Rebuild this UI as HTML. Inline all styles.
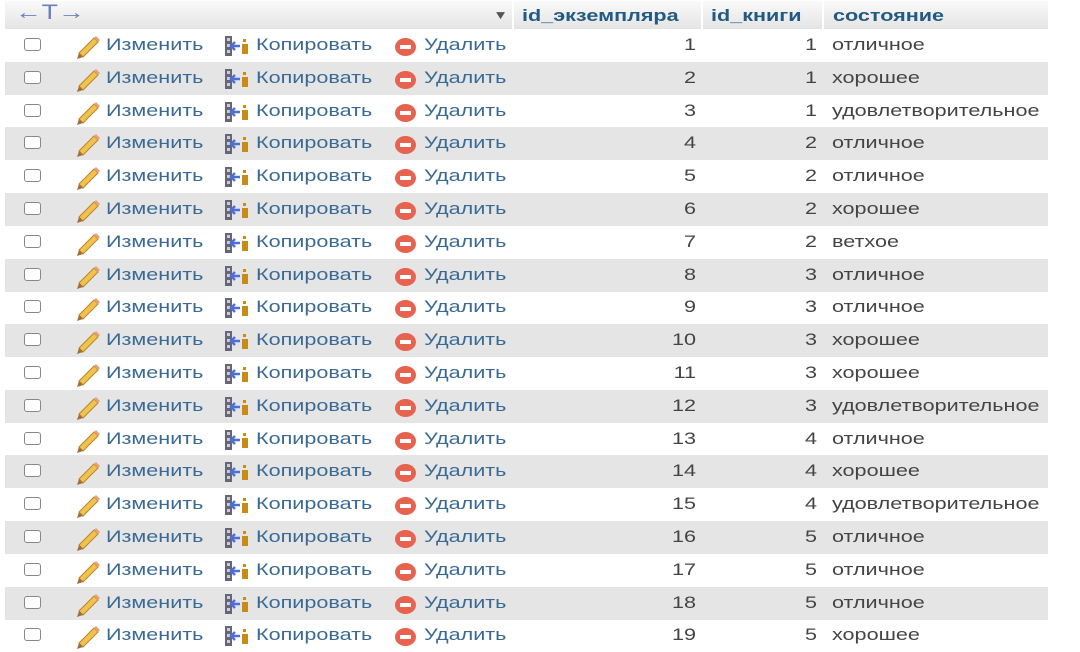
<!DOCTYPE html>
<html><head><meta charset="utf-8"><style>
body{margin:0;width:1080px;height:648px;background:#fff;position:relative;overflow:hidden;font-family:"Liberation Sans","DejaVu Sans",sans-serif;font-size:17px;}
.hd{position:absolute;left:5px;top:1px;width:1043px;height:28px;background:linear-gradient(#fafafa,#e4e4e4);}
.hd span{position:absolute;top:5px;font-weight:bold;color:#235a81;display:inline-block;transform:scaleX(1.27);transform-origin:left;}
.sep{position:absolute;top:1px;width:2px;height:28px;background:#fff;}
.r{position:absolute;left:5px;width:1043px;height:33px;}
.g{background:#e5e5e5;}
.r>*{position:absolute;top:6px;}
.r>span{display:inline-block;transform:scaleX(1.27);transform-origin:left;}
.cb{left:19px;top:9px!important;width:15px;height:11px;border:1.5px solid #888;border-radius:3px;background:#fff;}
.l{color:#3a6a94;}
.pen{left:70px;top:5px!important;}
.cp{left:218px;top:6px!important;}
.dl{left:390px;top:9px!important;width:21px;height:18px;border-radius:50%;background:#e8634f;}
.dl:after{content:"";position:absolute;left:5px;top:7px;width:11px;height:4px;background:#fff;}
.r>.n1{left:520px;width:171px;text-align:right;color:#444;transform-origin:right;}
.r>.n2{left:720px;width:92px;text-align:right;color:#444;transform-origin:right;}
.st{left:827px;color:#444;}
</style></head><body>
<div class="hd">
<span style="left:10px;top:0px;font-weight:normal;color:#6d7fc0;font-size:21px;">←T→</span>
<span style="left:488px;top:7px;font-size:12px;color:#555;font-weight:normal">▼</span>
<span style="left:517px">id_экземпляра</span>
<span style="left:706px">id_книги</span>
<span style="left:828px">состояние</span>
</div>
<div class="sep" style="left:512px"></div><div class="sep" style="left:701px"></div><div class="sep" style="left:822px"></div>
<svg width="0" height="0" style="position:absolute"><defs>
<g id="pen"><path d="M4 19 L19 4 L23 8 L8 23 Z" fill="#f2c24f" stroke="#b8862a" stroke-width="1"/><path d="M4 19 L2 25 L8 23 Z" fill="#a36d3a"/><path d="M19 4 L21 2 L25 6 L23 8 Z" fill="#e9a07a"/></g>
<g id="cp"><rect x="2" y="1" width="7" height="20" fill="#667"/><rect x="4" y="3" width="3" height="3" fill="#ccd"/><rect x="4" y="9" width="3" height="3" fill="#ccd"/><rect x="4" y="15" width="3" height="3" fill="#ccd"/><path d="M8 11 H17 M12 7 L8 11 L12 15" stroke="#4b6ed8" stroke-width="2.4" fill="none"/><rect x="19" y="9" width="6" height="10" fill="#c78c17"/><rect x="20" y="4" width="3" height="3" fill="#c78c17"/></g>
</defs></svg>
<div class="r" style="top:29px"><i class="cb"></i><svg class="pen" width="27" height="27"><use href="#pen"/></svg><span class="l" style="left:101px">Изменить</span><svg class="cp" width="27" height="22"><use href="#cp"/></svg><span class="l" style="left:251px">Копировать</span><i class="dl"></i><span class="l" style="left:419px">Удалить</span><span class="n1">1</span><span class="n2">1</span><span class="st">отличное</span></div>
<div class="r g" style="top:61.8px"><i class="cb"></i><svg class="pen" width="27" height="27"><use href="#pen"/></svg><span class="l" style="left:101px">Изменить</span><svg class="cp" width="27" height="22"><use href="#cp"/></svg><span class="l" style="left:251px">Копировать</span><i class="dl"></i><span class="l" style="left:419px">Удалить</span><span class="n1">2</span><span class="n2">1</span><span class="st">хорошее</span></div>
<div class="r" style="top:94.6px"><i class="cb"></i><svg class="pen" width="27" height="27"><use href="#pen"/></svg><span class="l" style="left:101px">Изменить</span><svg class="cp" width="27" height="22"><use href="#cp"/></svg><span class="l" style="left:251px">Копировать</span><i class="dl"></i><span class="l" style="left:419px">Удалить</span><span class="n1">3</span><span class="n2">1</span><span class="st">удовлетворительное</span></div>
<div class="r g" style="top:127.4px"><i class="cb"></i><svg class="pen" width="27" height="27"><use href="#pen"/></svg><span class="l" style="left:101px">Изменить</span><svg class="cp" width="27" height="22"><use href="#cp"/></svg><span class="l" style="left:251px">Копировать</span><i class="dl"></i><span class="l" style="left:419px">Удалить</span><span class="n1">4</span><span class="n2">2</span><span class="st">отличное</span></div>
<div class="r" style="top:160.2px"><i class="cb"></i><svg class="pen" width="27" height="27"><use href="#pen"/></svg><span class="l" style="left:101px">Изменить</span><svg class="cp" width="27" height="22"><use href="#cp"/></svg><span class="l" style="left:251px">Копировать</span><i class="dl"></i><span class="l" style="left:419px">Удалить</span><span class="n1">5</span><span class="n2">2</span><span class="st">отличное</span></div>
<div class="r g" style="top:193px"><i class="cb"></i><svg class="pen" width="27" height="27"><use href="#pen"/></svg><span class="l" style="left:101px">Изменить</span><svg class="cp" width="27" height="22"><use href="#cp"/></svg><span class="l" style="left:251px">Копировать</span><i class="dl"></i><span class="l" style="left:419px">Удалить</span><span class="n1">6</span><span class="n2">2</span><span class="st">хорошее</span></div>
<div class="r" style="top:225.8px"><i class="cb"></i><svg class="pen" width="27" height="27"><use href="#pen"/></svg><span class="l" style="left:101px">Изменить</span><svg class="cp" width="27" height="22"><use href="#cp"/></svg><span class="l" style="left:251px">Копировать</span><i class="dl"></i><span class="l" style="left:419px">Удалить</span><span class="n1">7</span><span class="n2">2</span><span class="st">ветхое</span></div>
<div class="r g" style="top:258.6px"><i class="cb"></i><svg class="pen" width="27" height="27"><use href="#pen"/></svg><span class="l" style="left:101px">Изменить</span><svg class="cp" width="27" height="22"><use href="#cp"/></svg><span class="l" style="left:251px">Копировать</span><i class="dl"></i><span class="l" style="left:419px">Удалить</span><span class="n1">8</span><span class="n2">3</span><span class="st">отличное</span></div>
<div class="r" style="top:291.4px"><i class="cb"></i><svg class="pen" width="27" height="27"><use href="#pen"/></svg><span class="l" style="left:101px">Изменить</span><svg class="cp" width="27" height="22"><use href="#cp"/></svg><span class="l" style="left:251px">Копировать</span><i class="dl"></i><span class="l" style="left:419px">Удалить</span><span class="n1">9</span><span class="n2">3</span><span class="st">отличное</span></div>
<div class="r g" style="top:324.2px"><i class="cb"></i><svg class="pen" width="27" height="27"><use href="#pen"/></svg><span class="l" style="left:101px">Изменить</span><svg class="cp" width="27" height="22"><use href="#cp"/></svg><span class="l" style="left:251px">Копировать</span><i class="dl"></i><span class="l" style="left:419px">Удалить</span><span class="n1">10</span><span class="n2">3</span><span class="st">хорошее</span></div>
<div class="r" style="top:357px"><i class="cb"></i><svg class="pen" width="27" height="27"><use href="#pen"/></svg><span class="l" style="left:101px">Изменить</span><svg class="cp" width="27" height="22"><use href="#cp"/></svg><span class="l" style="left:251px">Копировать</span><i class="dl"></i><span class="l" style="left:419px">Удалить</span><span class="n1">11</span><span class="n2">3</span><span class="st">хорошее</span></div>
<div class="r g" style="top:389.8px"><i class="cb"></i><svg class="pen" width="27" height="27"><use href="#pen"/></svg><span class="l" style="left:101px">Изменить</span><svg class="cp" width="27" height="22"><use href="#cp"/></svg><span class="l" style="left:251px">Копировать</span><i class="dl"></i><span class="l" style="left:419px">Удалить</span><span class="n1">12</span><span class="n2">3</span><span class="st">удовлетворительное</span></div>
<div class="r" style="top:422.6px"><i class="cb"></i><svg class="pen" width="27" height="27"><use href="#pen"/></svg><span class="l" style="left:101px">Изменить</span><svg class="cp" width="27" height="22"><use href="#cp"/></svg><span class="l" style="left:251px">Копировать</span><i class="dl"></i><span class="l" style="left:419px">Удалить</span><span class="n1">13</span><span class="n2">4</span><span class="st">отличное</span></div>
<div class="r g" style="top:455.4px"><i class="cb"></i><svg class="pen" width="27" height="27"><use href="#pen"/></svg><span class="l" style="left:101px">Изменить</span><svg class="cp" width="27" height="22"><use href="#cp"/></svg><span class="l" style="left:251px">Копировать</span><i class="dl"></i><span class="l" style="left:419px">Удалить</span><span class="n1">14</span><span class="n2">4</span><span class="st">хорошее</span></div>
<div class="r" style="top:488.2px"><i class="cb"></i><svg class="pen" width="27" height="27"><use href="#pen"/></svg><span class="l" style="left:101px">Изменить</span><svg class="cp" width="27" height="22"><use href="#cp"/></svg><span class="l" style="left:251px">Копировать</span><i class="dl"></i><span class="l" style="left:419px">Удалить</span><span class="n1">15</span><span class="n2">4</span><span class="st">удовлетворительное</span></div>
<div class="r g" style="top:521px"><i class="cb"></i><svg class="pen" width="27" height="27"><use href="#pen"/></svg><span class="l" style="left:101px">Изменить</span><svg class="cp" width="27" height="22"><use href="#cp"/></svg><span class="l" style="left:251px">Копировать</span><i class="dl"></i><span class="l" style="left:419px">Удалить</span><span class="n1">16</span><span class="n2">5</span><span class="st">отличное</span></div>
<div class="r" style="top:553.8px"><i class="cb"></i><svg class="pen" width="27" height="27"><use href="#pen"/></svg><span class="l" style="left:101px">Изменить</span><svg class="cp" width="27" height="22"><use href="#cp"/></svg><span class="l" style="left:251px">Копировать</span><i class="dl"></i><span class="l" style="left:419px">Удалить</span><span class="n1">17</span><span class="n2">5</span><span class="st">отличное</span></div>
<div class="r g" style="top:586.6px"><i class="cb"></i><svg class="pen" width="27" height="27"><use href="#pen"/></svg><span class="l" style="left:101px">Изменить</span><svg class="cp" width="27" height="22"><use href="#cp"/></svg><span class="l" style="left:251px">Копировать</span><i class="dl"></i><span class="l" style="left:419px">Удалить</span><span class="n1">18</span><span class="n2">5</span><span class="st">отличное</span></div>
<div class="r" style="top:619.4px"><i class="cb"></i><svg class="pen" width="27" height="27"><use href="#pen"/></svg><span class="l" style="left:101px">Изменить</span><svg class="cp" width="27" height="22"><use href="#cp"/></svg><span class="l" style="left:251px">Копировать</span><i class="dl"></i><span class="l" style="left:419px">Удалить</span><span class="n1">19</span><span class="n2">5</span><span class="st">хорошее</span></div>
</body></html>
